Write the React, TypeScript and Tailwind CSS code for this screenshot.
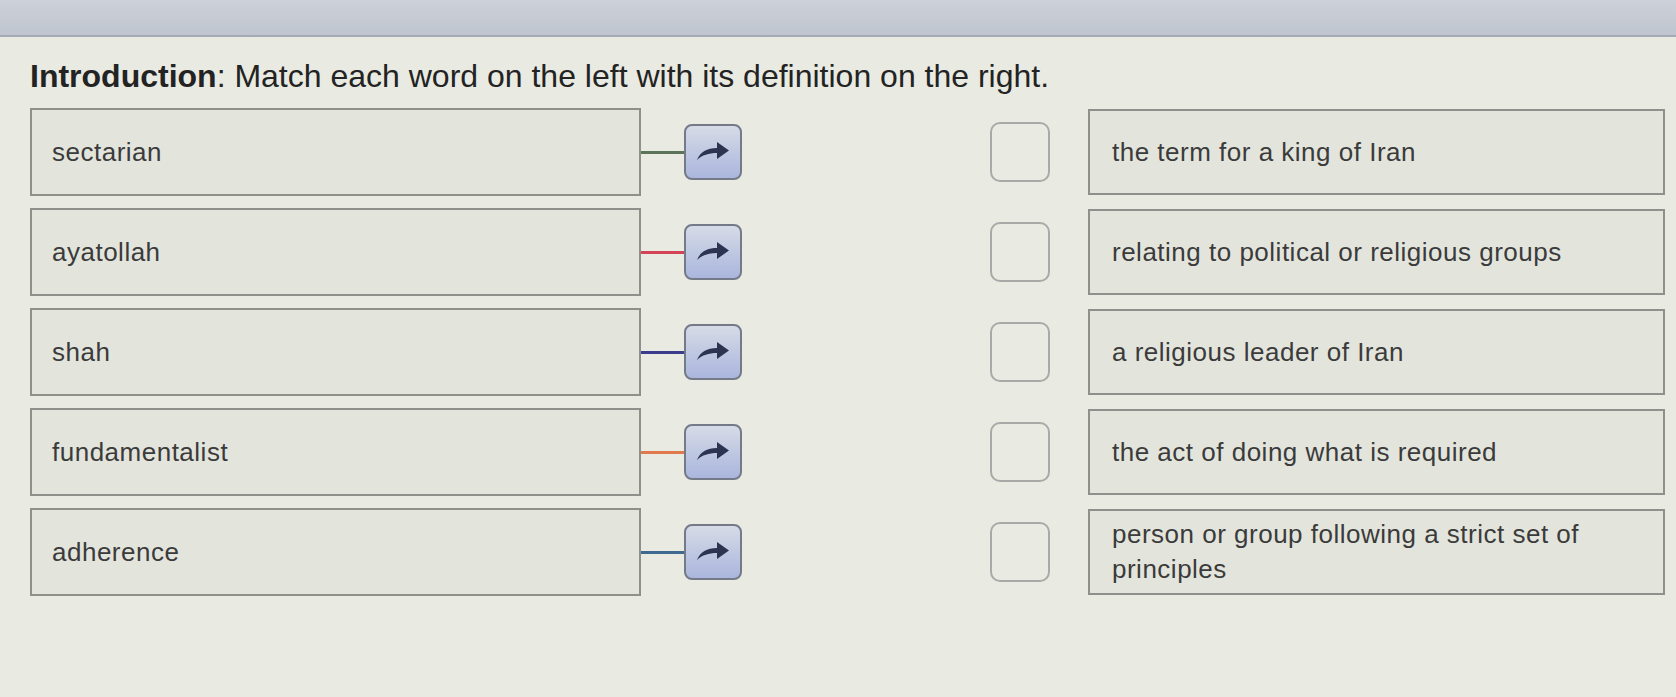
import React from "react";

type Row = { word: string; color: string; definition: string };

const rows: Row[] = [
  { word: "sectarian", color: "bg-[#5b7359]", definition: "the term for a king of Iran" },
  { word: "ayatollah", color: "bg-[#d44457]", definition: "relating to political or religious groups" },
  { word: "shah", color: "bg-[#3b3c8c]", definition: "a religious leader of Iran" },
  { word: "fundamentalist", color: "bg-[#e07a4c]", definition: "the act of doing what is required" },
  { word: "adherence", color: "bg-[#3f6a8f]", definition: "person or group following a strict set of principles" },
];

function ArrowIcon() {
  return (
    <svg width="38" height="26" viewBox="0 0 38 26">
      <path
        d="M3 21 C6 13 13 9 23 9 L23 3 L35 11.5 L23 20 L23 14 C15 14 8 16 3 21 Z"
        fill="#2c3452"
      />
    </svg>
  );
}

export default function App() {
  return (
    <div
      className="w-[1676px] h-[697px] overflow-hidden bg-[#e9eae2] text-[#3b3b3b] flex flex-col"
      style={{ fontFamily: '"Liberation Sans", Arial, sans-serif' }}
    >
      {/* top bar */}
      <div className="h-[37px] shrink-0 bg-gradient-to-b from-[#cdd1d9] to-[#bfc5cf] border-b-2 border-[#a3aab6]" />

      {/* title */}
      <div className="mt-[21px] pl-[30px] text-[32px] leading-[36px] text-[#232323]">
        <span className="font-bold">Introduction</span>: Match each word on the left with its definition on the right.
      </div>

      {/* matching rows */}
      <div className="mt-[14px] pl-[30px] flex flex-col gap-[12px]">
        {rows.map((row) => (
          <div key={row.word} className="flex items-center">
            <div className="w-[611px] h-[88px] shrink-0 flex items-center pl-[20px] bg-[#e3e5dd] border-2 border-[#8e908b] text-[26px] tracking-[0.5px]">
              {row.word}
            </div>
            <div className={`w-[43px] h-[3px] shrink-0 ${row.color}`} />
            <button className="w-[58px] h-[56px] shrink-0 flex items-center justify-center rounded-[8px] border-2 border-[#747a87] bg-gradient-to-b from-[#d6dbe6] to-[#aab6dd]">
              <ArrowIcon />
            </button>
            <div className="w-[248px] shrink-0" />
            <div className="w-[60px] h-[60px] shrink-0 rounded-[10px] border-2 border-[#a8aaa8]" />
            <div className="ml-[38px] w-[577px] h-[86px] shrink-0 flex items-center px-[22px] bg-[#e3e5dd] border-2 border-[#8e908b] text-[26px] leading-[35px] tracking-[0.5px]">
              {row.definition}
            </div>
          </div>
        ))}
      </div>
    </div>
  );
}
